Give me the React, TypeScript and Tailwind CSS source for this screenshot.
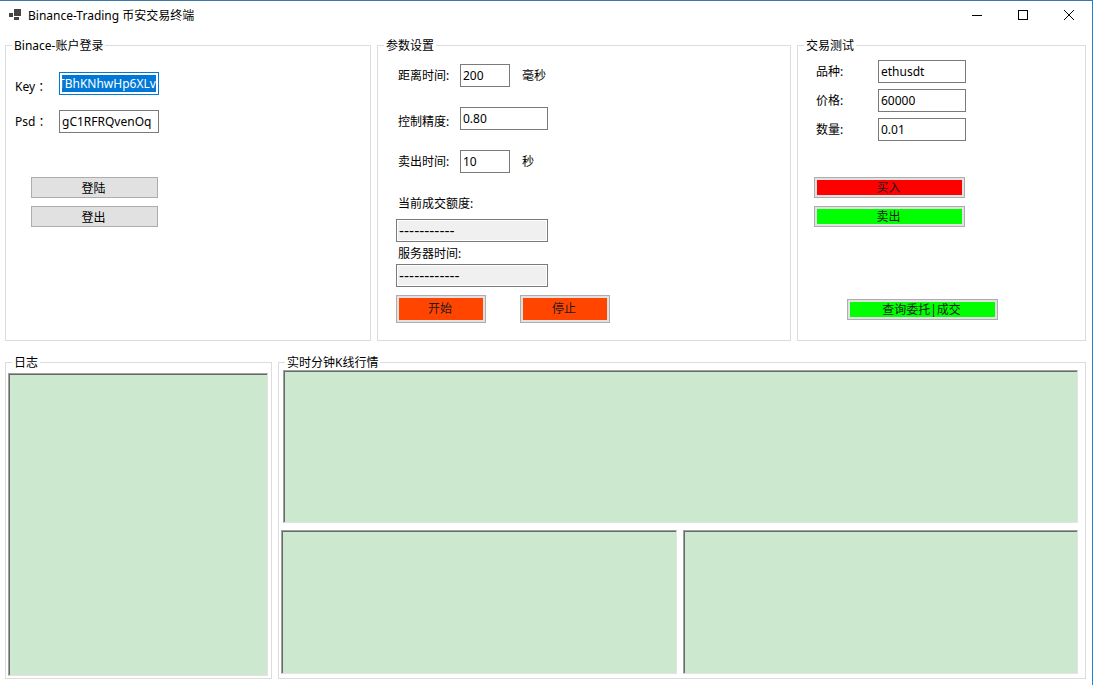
import { useEffect, useRef } from 'react'
import type { ComponentProps, ReactNode } from 'react'
import clsx from 'clsx'

function TitleBar() {
  return (
    <header className="flex h-7 items-center justify-between">
      <div className="flex items-center gap-1.5 pt-0.5 pl-2">
        <svg width="14" height="14" viewBox="0 0 14 14" fill="#444" aria-hidden="true">
          <rect x="1" y="4" width="4" height="4" />
          <rect x="6" y="0" width="7" height="7" />
          <rect x="6" y="8" width="5" height="3" />
        </svg>
        <h1>Binance-Trading 币安交易终端</h1>
      </div>
      <div className="flex h-full">
        <button type="button" aria-label="Minimize" className="flex w-[46px] items-center justify-center">
          <svg width="10" height="10" viewBox="0 0 10 10" stroke="#000" shapeRendering="crispEdges">
            <path d="M0 5.5h10" />
          </svg>
        </button>
        <button type="button" aria-label="Maximize" className="flex w-[46px] items-center justify-center">
          <svg width="10" height="10" viewBox="0 0 10 10" fill="none" stroke="#000" shapeRendering="crispEdges">
            <rect x="0.5" y="0.5" width="9" height="9" />
          </svg>
        </button>
        <button type="button" aria-label="Close" className="flex w-[46px] items-center justify-center">
          <svg width="10" height="10" viewBox="0 0 10 10" stroke="#000">
            <path d="M0 0l10 10M10 0L0 10" />
          </svg>
        </button>
      </div>
    </header>
  )
}

function GroupBox({ title, className, children }: { title: string; className?: string; children: ReactNode }) {
  return (
    <fieldset className="min-w-0 border border-[#dcdcdc]">
      <legend className="ml-1.5 px-0.5 leading-[15px]">{title}</legend>
      <div className={className}>{children}</div>
    </fieldset>
  )
}

function TextBox({ className, ...props }: ComponentProps<'input'>) {
  return (
    <input
      type="text"
      className={clsx(
        'h-[23px] border border-[#7a7a7a] px-0.5 leading-[17px] outline-none selection:bg-[#0078d7] selection:text-white focus:border-[#0078d7]',
        className
      )}
      {...props}
    />
  )
}

function Button({ children }: { children: ReactNode }) {
  return (
    <button type="button" className="h-[21px] w-[127px] border border-[#adadad] bg-[#e1e1e1] pt-0.5 pr-0.5">
      {children}
    </button>
  )
}

function ColorButton({ className, color, children }: { className: string; color: string; children: ReactNode }) {
  return (
    <button type="button" className={clsx('flex border border-[#adadad] bg-[#e1e1e1] p-0.5', className)}>
      <span className={clsx('flex h-full w-full items-center justify-center pr-0.5 text-[#1c1c1c]', color)}>
        {children}
      </span>
    </button>
  )
}

function Output({ className, ...props }: ComponentProps<'textarea'>) {
  return (
    <textarea
      readOnly
      className={clsx(
        'block w-full resize-none border border-t-[#a0a0a0] border-r-[#e3e3e3] border-b-[#e3e3e3] border-l-[#a0a0a0] bg-[#cce8cf] p-1 shadow-[inset_1px_1px_0_#696969] outline-none',
        className
      )}
      {...props}
    />
  )
}

function Account() {
  const keyRef = useRef<HTMLInputElement>(null)

  useEffect(() => {
    const input = keyRef.current
    if (!input) return
    input.focus()
    input.select()
    input.scrollLeft = input.scrollWidth
  }, [])

  return (
    <GroupBox title="Binace-账户登录" className="px-[9px] pt-[19px]">
      <div className="flex items-end">
        <label htmlFor="key" className="w-11">Key ：</label>
        <TextBox ref={keyRef} id="key" defaultValue="TBhKNhwHp6XLv" className="w-[100px]" />
      </div>
      <div className="mt-[15px] flex items-center">
        <label htmlFor="psd" className="w-11">Psd ：</label>
        <TextBox id="psd" defaultValue="gC1RFRQvenOq" className="w-[100px]" />
      </div>
      <div className="mt-11 flex flex-col items-start gap-2 pl-4">
        <Button>登陆</Button>
        <Button>登出</Button>
      </div>
    </GroupBox>
  )
}

function Params() {
  return (
    <GroupBox title="参数设置" className="px-[18px] pt-[11px] pb-[17px]">
      <div className="flex flex-col gap-5 pl-0.5">
        <div className="flex items-center">
          <label htmlFor="distance" className="w-[62px]">距离时间:</label>
          <TextBox id="distance" defaultValue="200" className="w-[50px]" />
          <span className="ml-3">毫秒</span>
        </div>
        <div className="flex items-end">
          <label htmlFor="precision" className="w-[62px]">控制精度:</label>
          <TextBox id="precision" defaultValue="0.80" className="w-[88px]" />
        </div>
        <div className="flex items-center">
          <label htmlFor="sell-time" className="w-[62px]">卖出时间:</label>
          <TextBox id="sell-time" defaultValue="10" className="w-[50px]" />
          <span className="ml-3">秒</span>
        </div>
      </div>
      <div className="mt-[23px] flex flex-col items-start">
        <label htmlFor="volume" className="pl-0.5">当前成交额度:</label>
        <TextBox
          id="volume"
          readOnly
          defaultValue="-----------"
          className="mt-[7px] w-[152px] bg-[#f0f0f0] font-['DejaVu_Sans',sans-serif] text-sm shadow-[inset_0_0_0_1px_#fff]"
        />
        <label htmlFor="server-time" className="mt-1 pl-0.5">服务器时间:</label>
        <TextBox
          id="server-time"
          readOnly
          defaultValue="------------"
          className="mt-0.5 w-[152px] bg-[#f0f0f0] font-['DejaVu_Sans',sans-serif] text-sm shadow-[inset_0_0_0_1px_#fff]"
        />
      </div>
      <div className="mt-2 flex gap-[34px]">
        <ColorButton className="h-7 w-[90px]" color="bg-[#ff4500]">开始</ColorButton>
        <ColorButton className="h-7 w-[90px]" color="bg-[#ff4500]">停止</ColorButton>
      </div>
    </GroupBox>
  )
}

function TradeTest() {
  const fields = [
    { id: 'symbol', label: '品种:', value: 'ethusdt' },
    { id: 'price', label: '价格:', value: '60000' },
    { id: 'amount', label: '数量:', value: '0.01' },
  ]

  return (
    <GroupBox title="交易测试" className="px-4 pt-[7px]">
      <div className="flex flex-col gap-1.5 pl-0.5">
        {fields.map((field) => (
          <div key={field.id} className="flex items-center">
            <label htmlFor={field.id} className="w-[62px]">{field.label}</label>
            <TextBox id={field.id} defaultValue={field.value} className="w-[88px]" />
          </div>
        ))}
      </div>
      <div className="mt-9 flex flex-col items-start gap-2">
        <ColorButton className="h-[21px] w-[151px]" color="bg-[#ff0000]">买入</ColorButton>
        <ColorButton className="h-[21px] w-[151px]" color="bg-[#00ff00]">卖出</ColorButton>
      </div>
      <div className="mt-[72px] pl-[33px]">
        <ColorButton className="h-[21px] w-[151px]" color="bg-[#00ff00]">查询委托|成交</ColorButton>
      </div>
    </GroupBox>
  )
}

export default function App() {
  return (
    <div className="min-h-screen border-t border-r border-t-[#3a78ab] border-r-[#1883d7] bg-white font-['Noto_Sans','Noto_Sans_CJK_SC',sans-serif] text-xs text-black">
      <TitleBar />
      <main className="pt-[9px] pr-1.5 pb-1.5 pl-[5px]">
        <div className="grid grid-cols-[366fr_414fr_289fr] gap-1.5">
          <Account />
          <Params />
          <TradeTest />
        </div>
        <div className="mt-3.5 grid grid-cols-[267fr_808fr] gap-1.5">
          <GroupBox title="日志" className="pt-[3px] pr-[3px] pb-0.5 pl-0.5">
            <Output aria-label="日志" className="h-[303px]" />
          </GroupBox>
          <GroupBox title="实时分钟K线行情" className="pr-[7px] pl-0.5">
            <div className="pl-0.5">
              <Output aria-label="K线行情" className="h-[153px]" />
            </div>
            <div className="mt-[7px] grid grid-cols-2 gap-1.5">
              <Output aria-label="委托" className="h-36" />
              <Output aria-label="成交" className="h-36" />
            </div>
          </GroupBox>
        </div>
      </main>
    </div>
  )
}
